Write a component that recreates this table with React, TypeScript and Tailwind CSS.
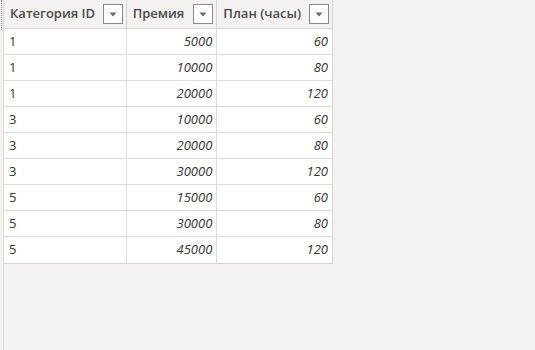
import React from "react";

const rows: [string, string, string][] = [
  ["1", "5000", "60"],
  ["1", "10000", "80"],
  ["1", "20000", "120"],
  ["3", "10000", "60"],
  ["3", "20000", "80"],
  ["3", "30000", "120"],
  ["5", "15000", "60"],
  ["5", "30000", "80"],
  ["5", "45000", "120"],
];

function FilterButton() {
  return (
    <div className="flex h-[20px] w-[20px] items-center justify-center border border-[#8a8a8a] bg-white">
      <svg width="8" height="5" viewBox="0 0 8 5">
        <path d="M0.5 0.5 H7.5 L4 4.5 Z" fill="#6b6b6b" />
      </svg>
    </div>
  );
}

function HeaderCell({ label, width, last }: { label: string; width: string; last?: boolean }) {
  return (
    <div
      className={`flex h-[29px] items-center justify-between pl-[6px] pr-[3px] border-b border-[#d4d4d4] ${
        last ? "" : "border-r"
      } ${width}`}
    >
      <span className="font-semibold text-[#4a4a4a]">{label}</span>
      <FilterButton />
    </div>
  );
}

export default function App() {
  return (
    <div
      className="flex h-[350px] w-[535px] bg-[#f3f2f1] text-[13px]"
      style={{ fontFamily: '"Open Sans", "Noto Sans", sans-serif' }}
    >
      <div className="w-[2px] border-r border-dotted border-[#7a7a7a] h-[30px]" />
      <div className="ml-[1px] h-full border-l border-[#dadada]">
        <div className="w-[329px] border-r border-b border-[#d4d4d4] bg-white">
          <div className="flex bg-[#f3f2f1]">
            <HeaderCell label="Категория ID" width="w-[123px]" />
            <HeaderCell label="Премия" width="w-[91px]" />
            <HeaderCell label="План (часы)" width="w-[115px]" last />
          </div>
          {rows.map((r, i) => (
            <div
              key={i}
              className={`flex h-[26px] items-center text-[#333333] ${
                i < rows.length - 1 ? "border-b border-[#dcdcdc]" : ""
              }`}
            >
              <div className="flex h-full w-[123px] items-center border-r border-[#dcdcdc] pl-[5px]">{r[0]}</div>
              <div className="flex h-full w-[91px] items-center justify-end border-r border-[#dcdcdc] pr-[4px] italic">
                {r[1]}
              </div>
              <div className="flex h-full w-[115px] items-center justify-end pr-[4px] italic">{r[2]}</div>
            </div>
          ))}
        </div>
      </div>
    </div>
  );
}
